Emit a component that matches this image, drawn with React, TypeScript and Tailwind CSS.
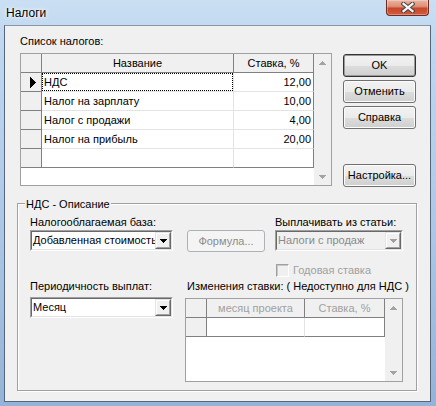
import React from "react";

function DownTri({ color = "#000" }: { color?: string }) {
  return (
    <svg width="7" height="4" viewBox="0 0 7 4" shapeRendering="crispEdges">
      <path d="M0 0h7v1h-1v1h-1v1h-1v1h-1v-1h-1v-1h-1v-1h-1z" fill={color} />
    </svg>
  );
}

function UpTri({ color = "#000" }: { color?: string }) {
  return (
    <svg width="7" height="4" viewBox="0 0 7 4" shapeRendering="crispEdges">
      <path d="M3 0h1v1h1v1h1v1h1v1h-7v-1h1v-1h1v-1h1z" fill={color} />
    </svg>
  );
}

function RowArrow() {
  return (
    <svg width="6" height="11" viewBox="0 0 6 11" shapeRendering="crispEdges">
      <path d="M0 0h1v1h1v1h1v1h1v1h1v1h1v1h-1v1h-1v1h-1v1h-1v1h-1v1h-1z" fill="#000" />
    </svg>
  );
}

function CloseBtn() {
  return (
    <div className="mr-[7px] flex h-[16px] w-[43px] items-center justify-center rounded-b-[4px] border border-t-0 border-[#6b2d22] bg-[linear-gradient(180deg,#ebb4a2_0%,#de9079_42%,#c8462b_56%,#d35c40_100%)] shadow-[inset_0_0_0_1px_rgba(255,255,255,0.3)]">
      <svg width="14" height="11" viewBox="0 0 14 11">
        <path d="M2.5 1.8 L11.5 9.2 M11.5 1.8 L2.5 9.2" stroke="#444" strokeWidth="4.2" strokeLinecap="square" />
        <path d="M2.5 1.8 L11.5 9.2 M11.5 1.8 L2.5 9.2" stroke="#f4f4f4" strokeWidth="2.3" strokeLinecap="square" />
      </svg>
    </div>
  );
}

function Btn({
  children,
  className = "",
  isDefault = false,
  disabled = false,
}: {
  children: React.ReactNode;
  className?: string;
  isDefault?: boolean;
  disabled?: boolean;
}) {
  const look = disabled
    ? "border-[#adb2b5] bg-[#f4f4f4] text-[#8c8c8c]"
    : isDefault
    ? "border-[#333333] bg-[linear-gradient(180deg,#f2f2f2_0%,#ebebeb_50%,#dddddd_51%,#cfcfcf_100%)] shadow-[inset_0_0_0_1px_#9a9a9a]"
    : "border-[#707070] bg-[linear-gradient(180deg,#f2f2f2_0%,#ebebeb_50%,#dddddd_51%,#cfcfcf_100%)] shadow-[inset_0_0_0_1px_#fcfcfc]";
  return (
    <div className={`flex h-[23px] shrink-0 items-center justify-center rounded-[3px] border ${look} ${className}`}>
      {children}
    </div>
  );
}

function DropBtn({ disabled = false }: { disabled?: boolean }) {
  return (
    <div className="flex h-[17px] w-[16px] shrink-0 border border-t-[#e3e3e3] border-l-[#e3e3e3] border-r-[#696969] border-b-[#696969]">
      <div className="flex flex-1 items-center justify-center border border-t-white border-l-white border-r-[#a0a0a0] border-b-[#a0a0a0] bg-[#f0f0f0]">
        <DownTri color={disabled ? "#a0a0a0" : "#000"} />
      </div>
    </div>
  );
}

function Combo({ text, disabled = false, className = "" }: { text: string; disabled?: boolean; className?: string }) {
  return (
    <div className={`flex h-[21px] border border-t-[#a0a0a0] border-l-[#a0a0a0] border-r-white border-b-white ${className}`}>
      <div
        className={`flex flex-1 overflow-hidden border border-t-[#696969] border-l-[#696969] border-r-[#e3e3e3] border-b-[#e3e3e3] ${
          disabled ? "bg-[#f0f0f0] text-[#8a8a8a]" : "bg-white text-black"
        }`}
      >
        <div className="flex-1 overflow-hidden whitespace-nowrap pl-[1px] leading-[17px]">{text}</div>
        <DropBtn disabled={disabled} />
      </div>
    </div>
  );
}

function Scroll() {
  return (
    <div className="flex w-[17px] shrink-0 flex-col justify-between bg-[#f0f0f0]">
      <div className="flex h-[17px] items-center justify-center">
        <UpTri color="#a3a3a3" />
      </div>
      <div className="flex h-[17px] items-center justify-center">
        <DownTri color="#a3a3a3" />
      </div>
    </div>
  );
}

const rows: [string, string][] = [
  ["НДС", "12,00"],
  ["Налог на зарплату", "10,00"],
  ["Налог с продажи", "4,00"],
  ["Налог на прибыль", "20,00"],
  ["", ""],
];

function TaxGrid() {
  return (
    <div className="flex h-[133px] w-[312px] border border-[#a0a0a0] bg-white">
      <div className="flex w-[293px] flex-col">
        <div className="flex h-[19px] shrink-0 bg-[#f0f0f0]">
          <div className="w-[21px] border-b border-r border-b-[#808080] border-r-[#808080]" />
          <div className="flex w-[192px] items-center justify-center border-b border-r border-b-[#808080] border-r-[#808080]">
            Название
          </div>
          <div className="flex w-[80px] items-center justify-center border-b border-r border-b-[#808080] border-r-[#808080]">
            Ставка, %
          </div>
        </div>
        {rows.map(([n, v], i) => {
          const last = i === rows.length - 1;
          return (
            <div key={i} className="flex h-[19px] shrink-0">
              <div className="flex w-[21px] items-center justify-center border-b border-r border-b-[#808080] border-r-[#808080] bg-[#f0f0f0] pl-[3px]">
                {i === 0 && <RowArrow />}
              </div>
              <div
                className={`w-[192px] border-b border-r border-r-[#e3e3e3] ${
                  last ? "border-b-[#808080]" : "border-b-[#e3e3e3]"
                }`}
              >
                {i === 0 ? (
                  <div className="flex h-full items-center border border-dotted border-black pl-[1px]">{n}</div>
                ) : (
                  <div className="flex h-full items-center pl-[2px]">{n}</div>
                )}
              </div>
              <div
                className={`flex w-[80px] items-center justify-end border-b border-r border-r-[#808080] pr-[2px] ${
                  last ? "border-b-[#808080]" : "border-b-[#e3e3e3]"
                }`}
              >
                {v}
              </div>
            </div>
          );
        })}
      </div>
      <Scroll />
    </div>
  );
}

function RateGrid() {
  return (
    <div className="flex h-[84px] w-[218px] border border-[#a0a0a0] bg-white">
      <div className="flex w-[199px] flex-col">
        <div className="flex h-[19px] shrink-0 bg-[#f0f0f0] text-[#a0a0a0]">
          <div className="w-[21px] border-b border-r border-b-[#808080] border-r-[#808080]" />
          <div className="flex w-[98px] items-center justify-center border-b border-r border-b-[#808080] border-r-[#808080]">
            месяц проекта
          </div>
          <div className="flex w-[80px] items-center justify-center border-b border-r border-b-[#808080] border-r-[#808080]">
            Ставка, %
          </div>
        </div>
        <div className="flex h-[19px] shrink-0">
          <div className="w-[21px] border-b border-r border-b-[#808080] border-r-[#808080] bg-[#f0f0f0]" />
          <div className="w-[98px] border-b border-r border-b-[#808080] border-r-[#e3e3e3]" />
          <div className="w-[80px] border-b border-r border-b-[#808080] border-r-[#808080]" />
        </div>
      </div>
      <Scroll />
    </div>
  );
}

export default function App() {
  return (
    <div className="flex h-[406px] w-[436px] flex-col overflow-hidden bg-[linear-gradient(180deg,#cadff3_0%,#c0d7ef_10%,#adc8e7_55%,#93b3d8_100%)] font-['Liberation_Sans',Arial,sans-serif] text-[11px] leading-[13px] text-black">
      <div className="flex h-[25px] shrink-0 items-start justify-between">
        <div className="pl-[6px] pt-[6px] text-[12px] leading-[14px] [text-shadow:0_0_6px_#ffffff,0_0_3px_#ffffff]">
          Налоги
        </div>
        <CloseBtn />
      </div>

      <div className="ml-[4px] flex h-[377px] w-[427px] shrink-0 flex-col border border-b-[#56667a] border-l-[#56667a] border-r-[#56667a] border-t-[#8797aa] bg-[#f0f0f0]">
        <div className="flex h-[160px] shrink-0">
          <div className="ml-[15px] flex w-[312px] flex-col pt-[9px]">
            <div className="mb-[5px] h-[13px]">Список налогов:</div>
            <TaxGrid />
          </div>
          <div className="ml-[11px] flex w-[73px] flex-col pt-[28px]">
            <Btn isDefault>OK</Btn>
            <Btn className="mt-[3px]">Отменить</Btn>
            <Btn className="mt-[3px]">Справка</Btn>
            <Btn className="mt-[35px]">Настройка...</Btn>
          </div>
        </div>

        <div className="relative ml-[12px] mt-[17px] h-[188px] w-[400px] shrink-0 border border-[#a0a0a0] shadow-[inset_1px_1px_0_#ffffff,1px_1px_0_#ffffff]">
          <div className="absolute left-[7px] top-[-6px] bg-[#f0f0f0] px-[1px]">НДС - Описание</div>

          <div className="flex items-start pt-[12px]">
            <div className="ml-[12px] flex w-[143px] flex-col">
              <div className="h-[13px] whitespace-nowrap">Налогооблагаемая база:</div>
              <Combo className="mt-[1px]" text="Добавленная стоимость" />
            </div>
            <Btn disabled className="ml-[14px] mt-[14px] !h-[22px] w-[78px]">
              Формула...
            </Btn>
            <div className="ml-[10px] flex w-[128px] flex-col">
              <div className="h-[13px] whitespace-nowrap">Выплачивать из статьи:</div>
              <Combo className="mt-[1px]" text="Налоги с продаж" disabled />
            </div>
          </div>

          <div className="ml-[258px] mt-[12px] flex h-[13px] items-center">
            <div className="h-[13px] w-[13px] border border-b-white border-l-[#a0a0a0] border-r-white border-t-[#a0a0a0] bg-[#f0f0f0] shadow-[inset_1px_1px_0_#c8c8c8]" />
            <span className="ml-[4px] text-[#a0a0a0]">Годовая ставка</span>
          </div>

          <div className="mt-[3px] flex items-start">
            <div className="ml-[12px] flex w-[143px] flex-col">
              <div className="h-[13px] whitespace-nowrap">Периодичность выплат:</div>
              <Combo className="mt-[4px]" text="Месяц" />
            </div>
            <div className="ml-[12px] flex w-[218px] flex-col">
              <div className="h-[13px] whitespace-nowrap pl-[2px]">Изменения ставки: ( Недоступно для НДС )</div>
              <div className="mt-[5px]">
                <RateGrid />
              </div>
            </div>
          </div>
        </div>
      </div>
    </div>
  );
}
